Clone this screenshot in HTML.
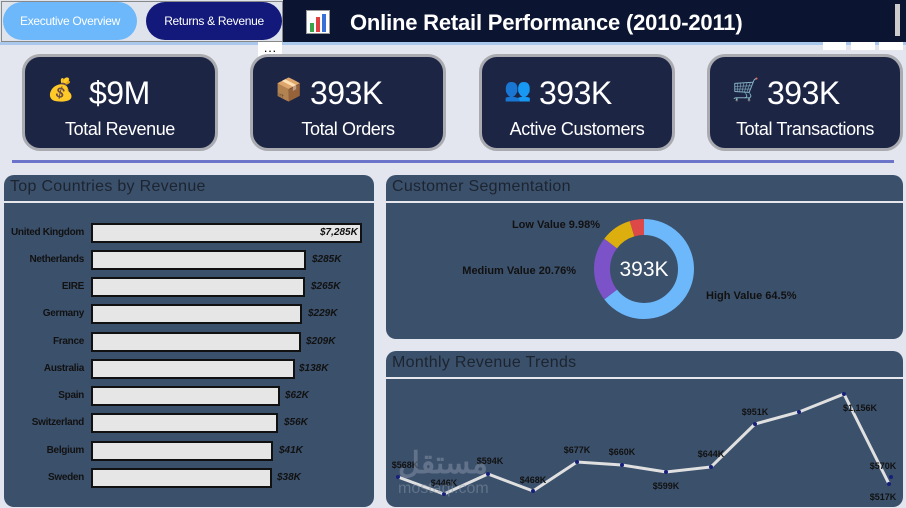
<!DOCTYPE html>
<html><head><meta charset="utf-8"><style>
*{margin:0;padding:0;box-sizing:border-box}
body{width:906px;height:508px;background:#e3e6ee;font-family:"Liberation Sans",sans-serif;position:relative;overflow:hidden}
.abs{position:absolute}
.hdr{left:283px;top:0;width:623px;height:42px;background:#0b1430}
.tab{top:2px;height:38px;border-radius:19px;color:#fff;font-size:12px;display:flex;align-items:center;justify-content:center;letter-spacing:-0.3px}
.card{top:54px;width:196px;height:97px;background:#1d2545;border:3px solid #a9abb0;border-radius:18px;color:#fff}
.card .v{position:absolute;top:18px;font-size:32px;letter-spacing:-0.5px}
.card .l{position:absolute;top:62px;width:100%;text-align:center;font-size:18px;letter-spacing:-0.4px}
.card .i{position:absolute;top:20px;left:22px;font-size:22px}
.panel{background:#3b506b;border-radius:10px;overflow:hidden}
.panel .t{position:absolute;left:6px;top:3px;font-size:16px;color:#1c2430;letter-spacing:0.3px}
.panel .ln{position:absolute;left:0;right:0;top:26px;height:2px;background:#e6e8ee}
.row{position:absolute;left:0;height:20px;width:370px}
.row .n{position:absolute;right:290px;top:4px;font-size:10px;font-weight:bold;color:#111;white-space:nowrap;letter-spacing:-0.3px}
.row .b{position:absolute;left:87px;top:0;height:20px;background:#e6e6e6;border:2px solid #111}
.row .v{position:absolute;top:4px;font-size:10px;font-weight:bold;font-style:italic;color:#111}
</style></head><body>
<div class="abs" style="left:0;top:0;width:283px;height:42px;background:#dfe3ec"></div>
<div class="abs" style="left:1px;top:1px;width:282px;height:41px;border:1px solid #888"></div>
<div class="abs tab" style="left:3px;width:134px;background:#6cb8fb">Executive Overview</div>
<div class="abs tab" style="left:146px;width:136px;background:#12197a">Returns &amp; Revenue</div>
<div class="abs hdr"></div>
<div class="abs" style="left:306px;top:10px;width:24px;height:24px;background:#fff;border:1px solid #999">
<div class="abs" style="left:3px;top:12px;width:4px;height:9px;background:#3aa548"></div>
<div class="abs" style="left:9px;top:6px;width:4px;height:15px;background:#e04040"></div>
<div class="abs" style="left:15px;top:3px;width:4px;height:18px;background:#3b6fd8"></div></div>
<div class="abs" style="left:350px;top:10px;color:#fff;font-size:22px;font-weight:bold;letter-spacing:-0.2px">Online Retail Performance (2010-2011)</div>
<div class="abs" style="left:895px;top:4px;width:5px;height:32px;background:#ccc"></div>
<div class="abs" style="left:0;top:42px;width:906px;height:3px;background:#a9c8ec"></div>
<div class="abs" style="left:258px;top:42px;width:24px;height:22px;background:#fff;font-size:13px;text-align:center;line-height:18px">···</div>
<div class="abs" style="left:823px;top:42px;width:23px;height:8px;background:#fff"></div>
<div class="abs" style="left:851px;top:42px;width:24px;height:8px;background:#fff"></div>
<div class="abs" style="left:879px;top:42px;width:24px;height:8px;background:#fff"></div>

<div class="abs card" style="left:22px"><span class="i">💰</span><span class="v" style="left:64px">$9M</span><div class="l">Total Revenue</div></div>
<div class="abs card" style="left:250px"><span class="i">📦</span><span class="v" style="left:57px">393K</span><div class="l">Total Orders</div></div>
<div class="abs card" style="left:479px"><span class="i">👥</span><span class="v" style="left:57px">393K</span><div class="l">Active Customers</div></div>
<div class="abs card" style="left:707px"><span class="i">🛒</span><span class="v" style="left:57px">393K</span><div class="l">Total Transactions</div></div>

<div class="abs" style="left:12px;top:160px;width:882px;height:3px;background:#6b74c8"></div>

<div class="abs panel" style="left:4px;top:175px;width:370px;height:332px">
<div class="t">Top Countries by Revenue</div><div class="ln"></div>
<div class="row" style="top:48px"><span class="n">United Kingdom</span><span class="b" style="width:271px"></span><span class="v" style="left:316px">$7,285K</span></div>
<div class="row" style="top:75px"><span class="n">Netherlands</span><span class="b" style="width:215px"></span><span class="v" style="left:308px">$285K</span></div>
<div class="row" style="top:102px"><span class="n">EIRE</span><span class="b" style="width:214px"></span><span class="v" style="left:307px">$265K</span></div>
<div class="row" style="top:129px"><span class="n">Germany</span><span class="b" style="width:211px"></span><span class="v" style="left:304px">$229K</span></div>
<div class="row" style="top:157px"><span class="n">France</span><span class="b" style="width:210px"></span><span class="v" style="left:302px">$209K</span></div>
<div class="row" style="top:184px"><span class="n">Australia</span><span class="b" style="width:204px"></span><span class="v" style="left:295px">$138K</span></div>
<div class="row" style="top:211px"><span class="n">Spain</span><span class="b" style="width:189px"></span><span class="v" style="left:281px">$62K</span></div>
<div class="row" style="top:238px"><span class="n">Switzerland</span><span class="b" style="width:187px"></span><span class="v" style="left:280px">$56K</span></div>
<div class="row" style="top:266px"><span class="n">Belgium</span><span class="b" style="width:182px"></span><span class="v" style="left:275px">$41K</span></div>
<div class="row" style="top:293px"><span class="n">Sweden</span><span class="b" style="width:181px"></span><span class="v" style="left:273px">$38K</span></div>
</div>

<div class="abs panel" style="left:386px;top:175px;width:517px;height:164px">
<div class="t">Customer Segmentation</div><div class="ln"></div>
<svg class="abs" style="left:0;top:0" width="517" height="164">
<g transform="rotate(-90 258 94)" fill="none" stroke-width="16">
<circle cx="258" cy="94" r="42" stroke="#6cb8fb" stroke-dasharray="170.2 263.9"/>
<circle cx="258" cy="94" r="42" stroke="#7b52c7" stroke-dasharray="0 170.2 54.8 263.9"/>
<circle cx="258" cy="94" r="42" stroke="#dcae0e" stroke-dasharray="0 225 26.3 263.9"/>
<circle cx="258" cy="94" r="42" stroke="#dd4848" stroke-dasharray="0 251.3 12.6 263.9"/>
</g>
<text x="258" y="101" fill="#fff" font-size="21" text-anchor="middle" font-family="Liberation Sans">393K</text>
<g font-family="Liberation Sans" font-size="11" font-weight="bold" fill="#111">
<text x="214" y="53" text-anchor="end">Low Value 9.98%</text>
<text x="190" y="99" text-anchor="end">Medium Value 20.76%</text>
<text x="320" y="124">High Value 64.5%</text></g>
</svg></div>

<div class="abs panel" style="left:386px;top:351px;width:517px;height:156px">
<div class="t">Monthly Revenue Trends</div><div class="ln"></div>
<svg class="abs" style="left:0;top:0" width="517" height="156">
<polyline fill="none" stroke="#e0e0e0" stroke-width="3" points="12,126 58,143 102,123 147,140 191,111 236,114 280,121 325,116 369,73 413,61 458,43 503,133"/>
<g fill="#16207a"><circle cx="12" cy="126" r="2"/><circle cx="58" cy="143" r="2"/><circle cx="102" cy="123" r="2"/><circle cx="147" cy="140" r="2"/><circle cx="191" cy="111" r="2"/><circle cx="236" cy="114" r="2"/><circle cx="280" cy="121" r="2"/><circle cx="325" cy="116" r="2"/><circle cx="369" cy="73" r="2"/><circle cx="413" cy="61" r="2"/><circle cx="458" cy="43" r="2"/><circle cx="503" cy="133" r="2"/><circle cx="505" cy="126" r="2"/></g>
<g font-family="Liberation Sans" font-size="9" font-weight="bold" fill="#111" text-anchor="middle">
<text x="19" y="117">$568K</text><text x="58" y="135">$446K</text><text x="104" y="113">$594K</text><text x="147" y="132">$468K</text><text x="191" y="102">$677K</text><text x="236" y="104">$660K</text><text x="280" y="138">$599K</text><text x="325" y="106">$644K</text><text x="369" y="64">$951K</text><text x="474" y="60">$1,156K</text><text x="497" y="118">$570K</text><text x="497" y="149">$517K</text></g>
<text x="12" y="122" font-family="Liberation Sans" font-size="30" font-weight="bold" fill="#8f9db0" opacity="0.45">مستقل</text>
<text x="12" y="142" font-family="Liberation Sans" font-size="16" fill="#8f9db0" opacity="0.45">mostaql.com</text>
</svg></div>
</body></html>
